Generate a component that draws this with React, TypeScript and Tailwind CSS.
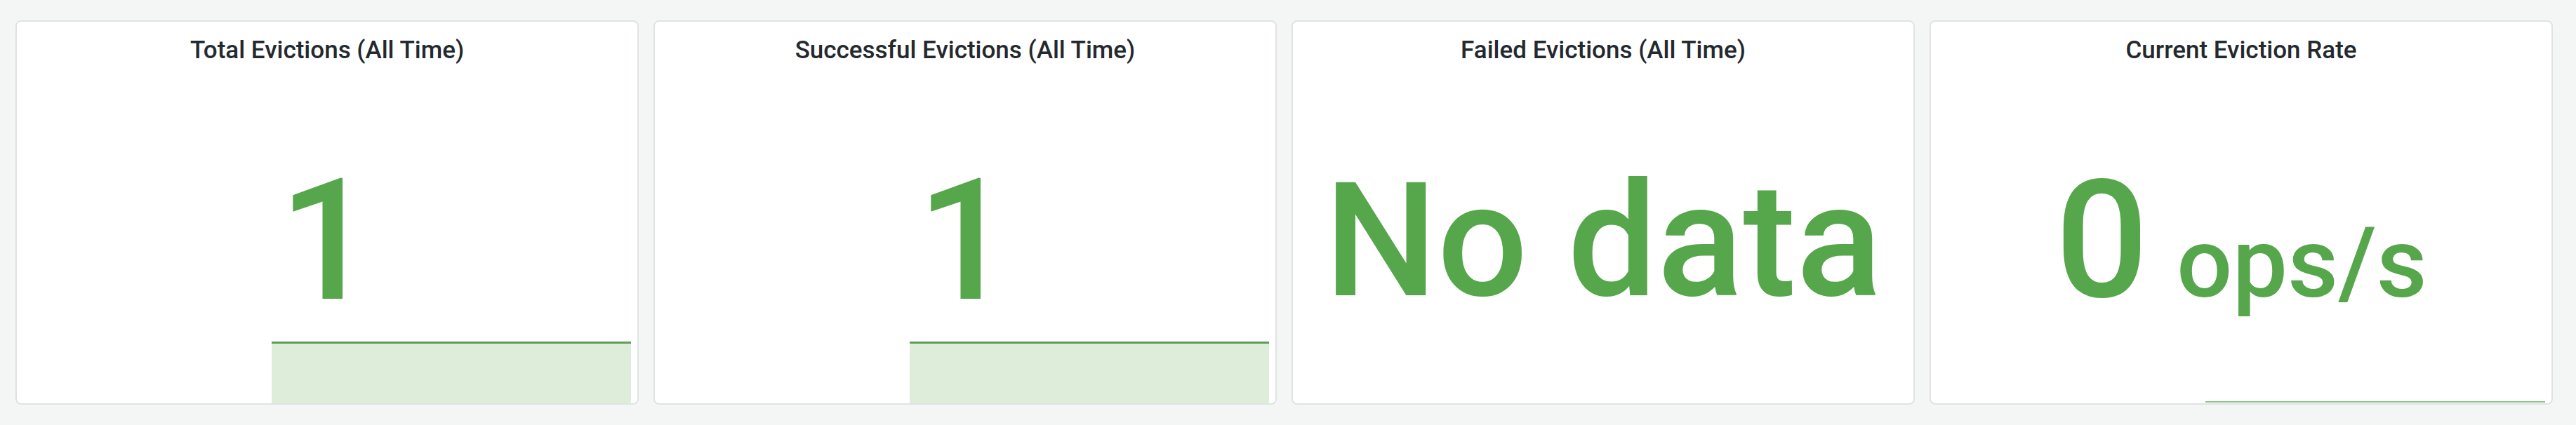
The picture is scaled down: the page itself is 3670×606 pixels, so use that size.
import React from 'react';

type Spark = { left: number; height: number; line: string; fill?: string; stroke: number };

type Panel = {
  title: string;
  value: string;
  valueSize: string;
  unit?: string;
  spark?: Spark;
};

const panels: Panel[] = [
  {
    title: 'Total Evictions (All Time)',
    value: '1',
    valueSize: 'text-[242px]',
    spark: { left: 363, height: 88, line: '#5a9f53', fill: '#deedda', stroke: 3 },
  },
  {
    title: 'Successful Evictions (All Time)',
    value: '1',
    valueSize: 'text-[242px]',
    spark: { left: 363, height: 88, line: '#5a9f53', fill: '#deedda', stroke: 3 },
  },
  {
    title: 'Failed Evictions (All Time)',
    value: 'No data',
    valueSize: 'text-[227px]',
  },
  {
    title: 'Current Eviction Rate',
    value: '0',
    valueSize: 'text-[234px]',
    unit: 'ops/s',
    spark: { left: 391, height: 3, line: '#8fc28a', stroke: 2 },
  },
];

function Sparkline({ spark }: { spark: Spark }) {
  return (
    <svg
      className="absolute bottom-0 right-[9px]"
      style={{ left: spark.left, height: spark.height, width: `calc(100% - ${spark.left + 9}px)` }}
      viewBox="0 0 100 100"
      preserveAspectRatio="none"
    >
      {spark.fill && <rect x="0" y="0" width="100" height="100" fill={spark.fill} />}
      <line
        x1="0"
        y1="0"
        x2="100"
        y2="0"
        stroke={spark.line}
        strokeWidth={spark.stroke * 2}
        vectorEffect="non-scaling-stroke"
      />
    </svg>
  );
}

function StatPanel({ panel }: { panel: Panel }) {
  return (
    <div className="flex flex-1 flex-col overflow-hidden rounded-[8px] border-2 border-[#e1e2e4] bg-white">
      {/* Header */}
      <div className="flex h-[80px] shrink-0 items-center justify-center">
        <h2 className="text-[35px] font-medium leading-none text-[#24292e]">{panel.title}</h2>
      </div>

      {/* Value */}
      <div className="relative flex flex-1 items-center justify-center">
        {panel.spark && <Sparkline spark={panel.spark} />}
        <div className="relative z-10 flex items-baseline whitespace-nowrap font-medium leading-none text-[#56a64b]">
          <span className={panel.valueSize}>{panel.value}</span>
          {panel.unit && <span className="ml-[40px] text-[140px]">{panel.unit}</span>}
        </div>
      </div>
    </div>
  );
}

export default function App() {
  return (
    <div
      className="flex h-[606px] w-[3670px] gap-[21px] bg-[#f4f5f5] pb-[29px] pl-[22px] pr-[33px] pt-[29px]"
      style={{ fontFamily: 'Roboto, Inter, "Noto Sans", sans-serif' }}
    >
      {panels.map((p) => (
        <StatPanel key={p.title} panel={p} />
      ))}
    </div>
  );
}
